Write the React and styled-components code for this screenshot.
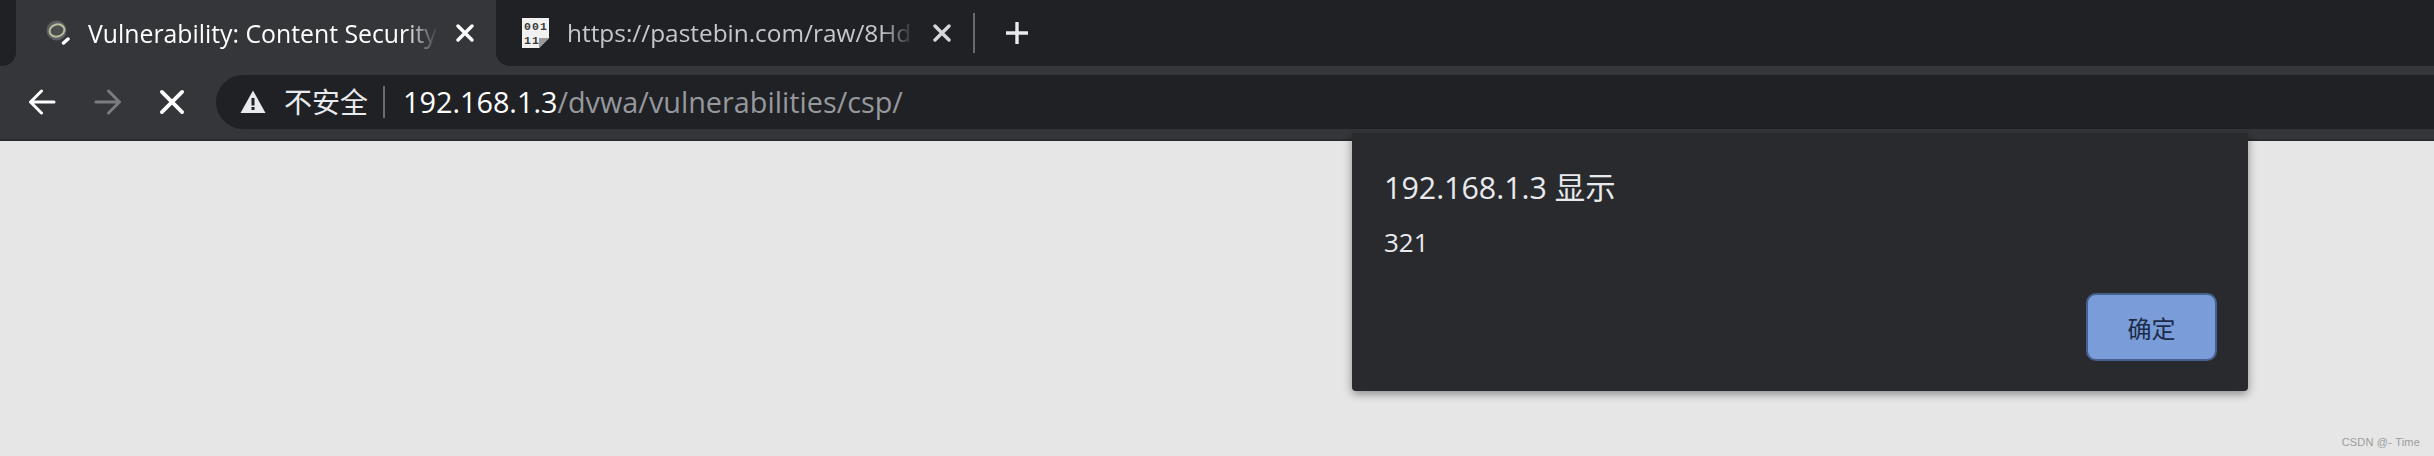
import React from 'react';
import styled, { createGlobalStyle } from 'styled-components';

const GlobalStyle = createGlobalStyle`
  html, body {
    margin: 0;
    padding: 0;
    height: 456px;
    overflow: hidden;
    background: #e6e6e6;
    font-family: "Open Sans", "Noto Sans CJK SC", sans-serif;
  }
`;

const Window = styled.div`
  position: relative;
  width: 2434px;
  height: 456px;
  display: flex;
  flex-direction: column;
`;

const TabStrip = styled.div`
  height: 66px;
  flex: none;
  display: flex;
  background: #35363a;
`;

const LeftEdge = styled.div`
  width: 16px;
  flex: none;
  background: #202124;
  border-bottom-right-radius: 14px;
`;

const ActiveTab = styled.div`
  width: 480px;
  flex: none;
  box-sizing: border-box;
  padding: 0 22px 0 30px;
  display: flex;
  align-items: center;
  gap: 18px;
  background: #35363a;
  border-radius: 20px 20px 0 0;
`;

const InactiveArea = styled.div`
  flex: 1;
  display: flex;
  align-items: center;
  background: #202124;
  border-bottom-left-radius: 14px;
  padding-left: 26px;
`;

const InactiveTab = styled.div`
  width: 451px;
  flex: none;
  box-sizing: border-box;
  padding-right: 22px;
  display: flex;
  align-items: center;
  gap: 18px;
`;

const TabTitle = styled.span`
  flex: 1;
  min-width: 0;
  overflow: hidden;
  white-space: nowrap;
  font-size: ${(p) => (p.$dim ? '24.4px' : '24.8px')};
  line-height: 34px;
  color: ${(p) => (p.$dim ? '#c4c7cc' : '#ffffff')};
  -webkit-mask-image: linear-gradient(to right, #000 calc(100% - 34px), transparent 100%);
  mask-image: linear-gradient(to right, #000 calc(100% - 34px), transparent 100%);
`;

const TabDivider = styled.div`
  width: 2px;
  height: 40px;
  background: #6a6b6e;
  flex: none;
`;

const NewTab = styled.button`
  all: unset;
  display: flex;
  margin-left: 30px;
`;

const Toolbar = styled.div`
  height: 75px;
  flex: none;
  box-sizing: border-box;
  padding: 9px 0 10px 28px;
  display: flex;
  align-items: center;
  background: #35363a;
  border-bottom: 2px solid #2a2b2e;
`;

const NavButton = styled.button`
  all: unset;
  display: flex;
  width: ${(p) => p.$w}px;
  flex: none;
`;

const Omnibox = styled.div`
  flex: 1;
  height: 54px;
  display: flex;
  align-items: center;
  padding-left: 24px;
  background: #202124;
  border-radius: 28px 0 0 28px;
`;

const SecurityLabel = styled.span`
  margin-left: 18px;
  font-size: 28px;
  line-height: 36px;
  color: #e8eaed;
`;

const UrlDivider = styled.div`
  width: 2px;
  height: 32px;
  margin: 0 18px 0 15px;
  background: #6a6b6e;
`;

const Url = styled.div`
  font-size: 28.8px;
  line-height: 36px;
  color: #ffffff;
  white-space: nowrap;
`;

const UrlPath = styled.span`
  color: #95989d;
`;

const Page = styled.div`
  flex: 1;
  background: #e6e6e6;
`;

const Dialog = styled.div`
  position: absolute;
  left: 1352px;
  top: 133px;
  width: 896px;
  height: 258px;
  box-sizing: border-box;
  padding: 35px 31px 0 32px;
  display: flex;
  flex-direction: column;
  background: #292a2d;
  border-radius: 0 0 4px 4px;
  box-shadow: 0 3px 10px rgba(0, 0, 0, 0.4);
`;

const DialogTitle = styled.div`
  font-size: 30.4px;
  line-height: 40px;
  color: #e8eaed;
`;

const DialogMessage = styled.div`
  margin-top: 16px;
  font-size: 26px;
  line-height: 36px;
  color: #e8eaed;
`;

const DialogActions = styled.div`
  margin-top: 33px;
  display: flex;
  justify-content: flex-end;
`;

const OkButton = styled.button`
  all: unset;
  box-sizing: border-box;
  width: 131px;
  height: 68px;
  display: flex;
  align-items: center;
  justify-content: center;
  font-size: 24px;
  color: #1c2c48;
  background: #7a9cd8;
  border: 2px solid #47618f;
  border-radius: 10px;
`;

const Watermark = styled.div`
  position: absolute;
  right: 14px;
  bottom: 7px;
  font-family: "Liberation Sans", sans-serif;
  font-size: 11px;
  line-height: 14px;
  letter-spacing: 0.2px;
  color: #9d9d9d;
`;

const Close = ({ size = 18, color = '#fff', width = 3.4 }) => (
  <svg width={size} height={size} viewBox="0 0 18 18" style={{ flex: 'none' }}>
    <path d="M2 2 L16 16 M16 2 L2 16" stroke={color} strokeWidth={width} strokeLinecap="round" />
  </svg>
);

const Arrow = ({ color, flip }) => (
  <svg width="28" height="26" viewBox="0 0 28 26" style={flip ? { transform: 'scaleX(-1)' } : undefined}>
    <path d="M2.5 13 H26 M13.5 2 L2.5 13 L13.5 24" fill="none" stroke={color} strokeWidth="3" strokeLinecap="round" strokeLinejoin="round" />
  </svg>
);

const WarningIcon = () => (
  <svg width="26" height="24" viewBox="0 0 26 24" style={{ flex: 'none' }}>
    <path d="M13 0.5 L25.5 23 H0.5 Z" fill="#e8eaed" />
    <rect x="11.5" y="8" width="3" height="7.5" fill="#202124" />
    <rect x="11.5" y="17" width="3" height="3" fill="#202124" />
  </svg>
);

const LoadingFavicon = () => (
  <svg width="24" height="26" viewBox="0 0 24 26" style={{ flex: 'none' }}>
    <circle cx="10.5" cy="10.5" r="10" fill="#5c5e61" />
    <ellipse cx="11" cy="10.5" rx="7.5" ry="6" fill="#4c4e4e" stroke="#b6bf9f" strokeWidth="2" transform="rotate(-15 11 10.5)" />
    <path d="M17.5 23 L22 19" stroke="#ffffff" strokeWidth="3.4" strokeLinecap="round" />
  </svg>
);

const BinaryFavicon = () => (
  <svg width="27" height="30" viewBox="0 0 27 30" style={{ flex: 'none' }}>
    <path d="M0 0 H27 V20 L17 30 H0 Z" fill="#f1f1f1" />
    <path d="M17 30 V20 H27 Z" fill="#9a9a9a" />
    <text x="2" y="12" fontFamily="Liberation Mono, monospace" fontSize="11.5" fontWeight="700" fill="#3a3a3a" textLength="23" lengthAdjust="spacing">001</text>
    <text x="2" y="26" fontFamily="Liberation Mono, monospace" fontSize="11.5" fontWeight="700" fill="#3a3a3a" textLength="15" lengthAdjust="spacing">11</text>
  </svg>
);

const App = () => {
  return (
    <Window>
      <GlobalStyle />
      <TabStrip>
        <LeftEdge />
        <ActiveTab>
          <LoadingFavicon />
          <TabTitle>Vulnerability: Content Security</TabTitle>
          <Close />
        </ActiveTab>
        <InactiveArea>
          <InactiveTab>
            <BinaryFavicon />
            <TabTitle $dim>https://pastebin.com/raw/8Hd</TabTitle>
            <Close color="#d5d7da" />
          </InactiveTab>
          <TabDivider />
          <NewTab>
            <svg width="24" height="24" viewBox="0 0 24 24">
              <path d="M12 1 V23 M1 12 H23" stroke="#e8eaed" strokeWidth="3.4" />
            </svg>
          </NewTab>
        </InactiveArea>
      </TabStrip>
      <Toolbar>
        <NavButton $w={66}><Arrow color="#ffffff" /></NavButton>
        <NavButton $w={65}><Arrow color="#7b7c7f" flip /></NavButton>
        <NavButton $w={57}><Close size={26} width={2.6} /></NavButton>
        <Omnibox>
          <WarningIcon />
          <SecurityLabel>不安全</SecurityLabel>
          <UrlDivider />
          <Url>192.168.1.3<UrlPath>/dvwa/vulnerabilities/csp/</UrlPath></Url>
        </Omnibox>
      </Toolbar>
      <Page />
      <Dialog>
        <DialogTitle>192.168.1.3 显示</DialogTitle>
        <DialogMessage>321</DialogMessage>
        <DialogActions>
          <OkButton>确定</OkButton>
        </DialogActions>
      </Dialog>
      <Watermark>CSDN @- Time</Watermark>
    </Window>
  );
};

export default App;
